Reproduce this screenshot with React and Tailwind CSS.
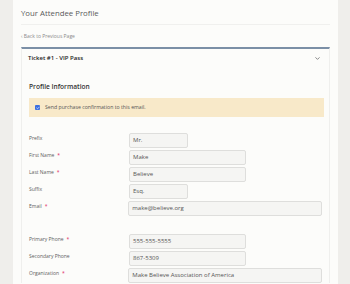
import { Check, ChevronDown } from 'lucide-react';

const fields = [
  { label: 'Prefix', value: 'Mr.', size: 'sm' },
  { label: 'First Name', value: 'Make', size: 'md', req: true },
  { label: 'Last Name', value: 'Believe', size: 'md', req: true },
  { label: 'Suffix', value: 'Esq.', size: 'sm' },
  { label: 'Email', value: 'make@believe.org', size: 'lg', req: true },
];

const contact = [
  { label: 'Primary Phone', value: '555-555-5555', size: 'md', req: true },
  { label: 'Secondary Phone', value: '867-5309', size: 'md' },
  { label: 'Organization', value: 'Make Believe Association of America', size: 'lg', req: true },
];

const widths = { sm: 'w-[59px]', md: 'w-[117px]', lg: 'w-[195px]' };

const Field = ({ f }) => (
  <div className="flex items-start">
    <div className="w-[100px] pt-[1px] text-[5px] text-[#5c5c5c] leading-[8px]">
      {f.label}
      {f.req && <span className="text-[#e0245e] ml-[3px]">*</span>}
    </div>
    <div
      className={`${widths[f.size]} h-[15px] bg-[#f5f5f3] border border-[#dededc] rounded-[2px] px-[3px] flex items-center text-[6px] text-[#555]`}
    >
      {f.value}
    </div>
  </div>
);

const App = () => {
  return (
    <div
      className="w-[350px] h-[284px] overflow-hidden bg-[#efeeeb] pl-[13px] pr-[12px]"
      style={{ fontFamily: '"Open Sans", "Liberation Sans", sans-serif' }}
    >
      <div className="h-full bg-[#fcfcfa] px-[8px]">
        {/* Header */}
        <div className="pt-[8px] pb-[5px] border-b border-[#f0f0ee]">
          <h1 className="text-[7.8px] leading-[11px] text-[#5a5a5a]">Your Attendee Profile</h1>
        </div>
        <div className="pt-[7px] pb-[7px] text-[5px] leading-[8px] text-[#8a8a8a]">‹ Back to Previous Page</div>

        {/* Ticket */}
        <div className="border-t-2 border-[#7b8fa6] border-x border-x-[#efefed]">
          <div className="flex items-center justify-between pl-[6px] pr-[8px] h-[18px]">
            <span className="text-[6px] font-semibold text-[#222]">Ticket #1 - VIP Pass</span>
            <ChevronDown size={7} strokeWidth={3} className="text-[#777]" />
          </div>

          <div className="px-[7px] pt-[15px]">
            <h2 className="text-[6.6px] leading-[10px] font-semibold text-[#333]">Profile Information</h2>
            <div className="mt-[6px] h-[19px] w-[295px] bg-[#f8e9c9] flex items-center pl-[6px] gap-[5px]">
              <span className="w-[5px] h-[5px] bg-[#3b6fe0] rounded-[1px] flex items-center justify-center">
                <Check size={4} strokeWidth={4} className="text-white" />
              </span>
              <span className="text-[5.2px] text-[#555]">Send purchase confirmation to this email.</span>
            </div>

            <div className="mt-[16px] flex flex-col gap-[2px]">
              {fields.map((f) => (
                <Field key={f.label} f={f} />
              ))}
            </div>
            <div className="mt-[18px] flex flex-col gap-[2px]">
              {contact.map((f) => (
                <Field key={f.label} f={f} />
              ))}
            </div>
          </div>
        </div>
      </div>
    </div>
  );
};

export default App;
